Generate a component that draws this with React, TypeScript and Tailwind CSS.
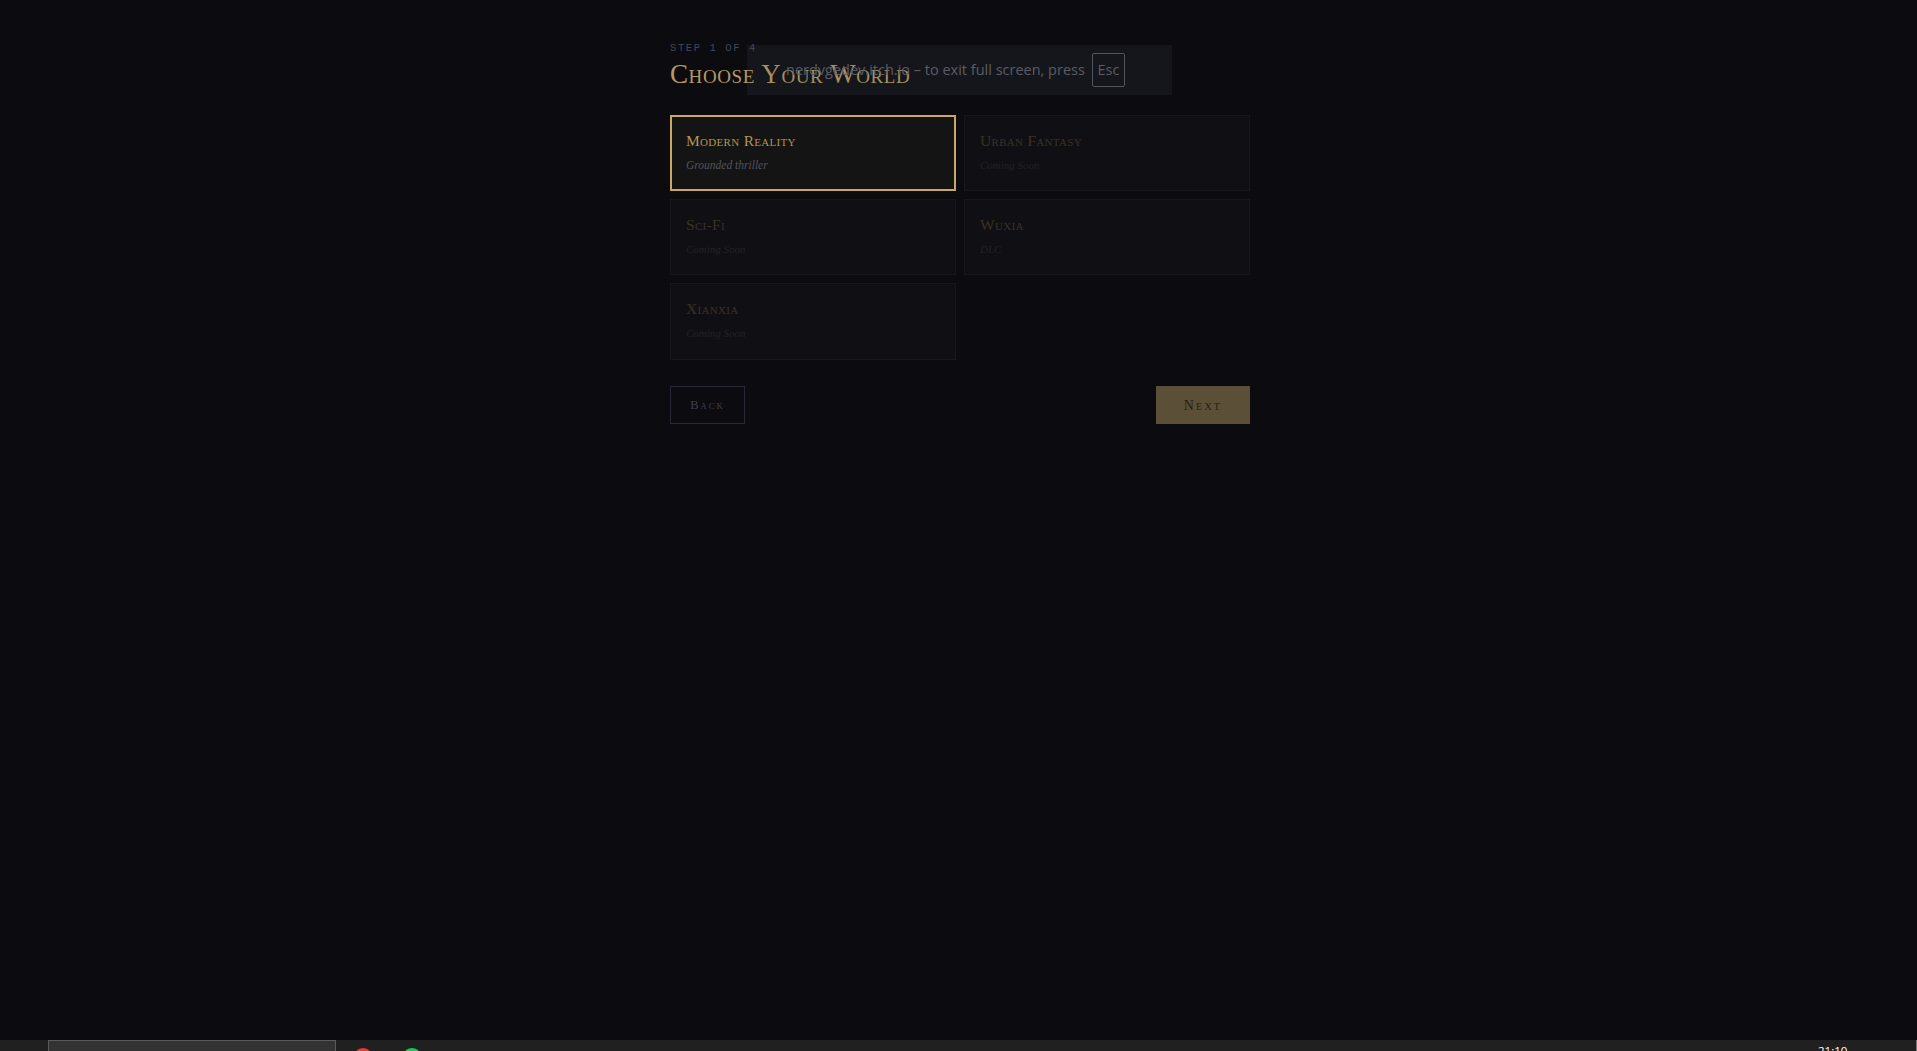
const SERIF = "font-['Liberation_Serif',serif]"

const WORLDS = [
  { name: 'Modern Reality', sub: 'Grounded thriller', active: true },
  { name: 'Urban Fantasy', sub: 'Coming Soon' },
  { name: 'Sci-Fi', sub: 'Coming Soon' },
  { name: 'Wuxia', sub: 'DLC' },
  { name: 'Xianxia', sub: 'Coming Soon', tall: true },
]

function WorldCard({ name, sub, active, tall }: { name: string; sub: string; active?: boolean; tall?: boolean }) {
  return (
    <div
      className={`${tall ? 'h-[77px]' : 'h-[76px]'} ${
        active
          ? 'border-2 border-[#c9a961] bg-[#141414] px-[14px] pt-[14px]'
          : 'border border-[#17171d] bg-[#101014] px-[15px] pt-[15px]'
      }`}
    >
      <p
        className={`${SERIF} text-[15.5px] leading-[20px] tracking-[0.3px] [font-variant:small-caps] ${
          active ? 'text-[#b0955a]' : 'text-[#3a3222]'
        }`}
      >
        {name}
      </p>
      <p
        className={`${SERIF} mt-[5px] leading-[18px] italic ${
          active ? 'text-[11.5px] text-[#55535e]' : 'text-[11px] text-[#222227]'
        }`}
      >
        {sub}
      </p>
    </div>
  )
}

export default function App() {
  return (
    <div className="relative flex h-[1051px] flex-col overflow-hidden bg-[#0b0b10]">
      <main className="flex flex-1 justify-center pt-[40px] pl-[3px]">
        <div className="w-[580px]">
          <p className="pt-[2px] font-['Liberation_Mono',monospace] text-[10.5px] leading-[12px] tracking-[1.6px] text-[#46465a]">
            STEP 1 OF 4
          </p>
          <h1 className={`${SERIF} mt-[3px] text-[27px] leading-[34px] tracking-[0.6px] text-[#b39a62] [font-variant:small-caps]`}>
            Choose Your World
          </h1>

          <div className="mt-[24px] grid grid-cols-2 gap-2">
            {WORLDS.map((w) => (
              <WorldCard key={w.name} {...w} />
            ))}
          </div>

          <div className="mt-[26px] flex justify-between">
            <button className={`${SERIF} h-[38px] w-[75px] border border-[#272738] text-[12.5px] tracking-[1.8px] text-[#3f3f50] [font-variant:small-caps]`}>
              Back
            </button>
            <button className={`${SERIF} h-[38px] w-[94px] bg-[#5c4f37] text-[14px] tracking-[2.2px] text-[#241f17] [font-variant:small-caps]`}>
              Next
            </button>
          </div>
        </div>
      </main>

      {/* fullscreen notice from the browser, fading out over the page */}
      <div className="absolute top-[45px] left-[747px] flex h-[50px] w-[425px] items-center bg-[#53595c]/[0.15] pl-[39px] font-['Open_Sans',sans-serif] text-[14.5px] text-[#5a5c65]">
        <span>nerdvgedev.itch.io – to exit full screen, press</span>
        <span className="ml-[7px] flex h-[34px] w-[33px] items-center justify-center rounded-[2px] border border-[#52545c]">Esc</span>
      </div>

      {/* taskbar, mostly cut off at the bottom edge */}
      <footer className="relative h-[11px] shrink-0 overflow-hidden bg-[#202020]">
        <div className="absolute left-[48px] h-[20px] w-[288px] border border-[#5a5a5a] bg-[#333333]" />
        <div className="absolute top-[8px] left-[353px] h-[20px] w-[20px] rounded-full bg-[#e53935]" />
        <div className="absolute top-[8px] left-[402px] h-[20px] w-[20px] rounded-full bg-[#22c55e]" />
        <span className="absolute top-[3px] left-[1818px] font-['Open_Sans',sans-serif] text-[11.5px] leading-[16px] text-white">
          21:10
        </span>
        <div className="absolute top-0 right-0 h-[11px] w-px bg-[#777777]" />
      </footer>
    </div>
  )
}
